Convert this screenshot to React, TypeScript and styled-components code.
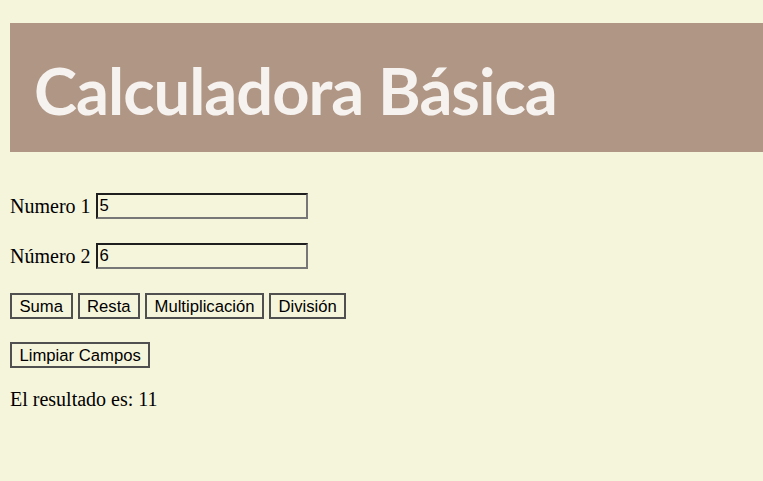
import React, { useState } from "react";
import styled, { createGlobalStyle } from "styled-components";

const Global = createGlobalStyle`
  html, body { margin: 0; padding: 0; background: #f5f5dc; }
  body { padding: 23px 0 0 10px; font-family: "Liberation Serif", "Times New Roman", serif; font-size: 20px; color: #000; }
`;

const Header = styled.header`
  background: #b09684;
  height: 129px;
  display: flex;
  align-items: center;
  padding-left: 24px;
`;

const Title = styled.h1`
  margin: 6px 0 0 0;
  font-family: Lato, "Open Sans", sans-serif;
  font-weight: 700;
  font-size: 65px;
  line-height: 1;
  color: #f6f2f0;
  letter-spacing: -1px;
`;

const Main = styled.main`
  display: flex;
  flex-direction: column;
  align-items: flex-start;
  padding-top: 41px;
`;

const Row = styled.div<{ $gap?: number }>`
  display: flex;
  align-items: center;
  gap: 5px;
  height: 26px;
  margin-bottom: ${(p) => p.$gap ?? 24}px;
`;

const Label = styled.label`
  font-size: 20px;
  line-height: 23px;
`;

const Input = styled.input`
  box-sizing: border-box;
  width: 212px;
  height: 26px;
  margin: 0;
  padding: 1px 2px;
  background: transparent;
  border-style: solid;
  border-width: 2px;
  border-color: #1e1e1e #777 #777 #1e1e1e;
  font-family: "Liberation Sans", Arial, sans-serif;
  font-size: 16.67px;
  color: #000;
  outline: none;
`;

const Button = styled.button`
  box-sizing: border-box;
  height: 26px;
  margin: 0;
  padding: 0 7.5px;
  background: transparent;
  border: 2px solid #505050;
  font-family: "Liberation Sans", Arial, sans-serif;
  font-size: 16.67px;
  line-height: 19px;
  color: #000;
  cursor: pointer;
`;

const Result = styled.p`
  margin: 0;
  font-size: 20px;
  line-height: 23px;
`;

export default function App() {
  const [a, setA] = useState("5");
  const [b, setB] = useState("6");
  const [res, setRes] = useState<string>("11");
  const calc = (op: string) => {
    const x = parseFloat(a);
    const y = parseFloat(b);
    let r = 0;
    if (op === "+") r = x + y;
    if (op === "-") r = x - y;
    if (op === "*") r = x * y;
    if (op === "/") r = x / y;
    setRes(String(r));
  };
  return (
    <>
      <Global />
      <Header>
        <Title>Calculadora Básica</Title>
      </Header>
      <Main>
        <Row>
          <Label>Numero 1</Label>
          <Input value={a} onChange={(e) => setA(e.target.value)} />
        </Row>
        <Row>
          <Label>Número 2</Label>
          <Input value={b} onChange={(e) => setB(e.target.value)} />
        </Row>
        <Row $gap={23}>
          <Button onClick={() => calc("+")}>Suma</Button>
          <Button onClick={() => calc("-")}>Resta</Button>
          <Button onClick={() => calc("*")}>Multiplicación</Button>
          <Button onClick={() => calc("/")}>División</Button>
        </Row>
        <Row $gap={20}>
          <Button onClick={() => { setA(""); setB(""); setRes(""); }}>Limpiar Campos</Button>
        </Row>
        <Result>El resultado es: {res}</Result>
      </Main>
    </>
  );
}
